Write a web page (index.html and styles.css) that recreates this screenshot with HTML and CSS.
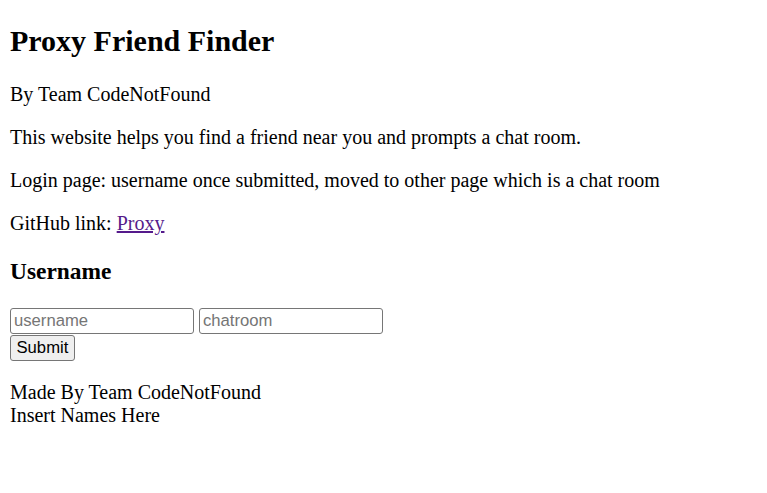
FILE: index.html
```html
<!DOCTYPE html>
<html>
<head>
<meta charset="utf-8">
<title>Proxy Friend Finder</title>
<link rel="stylesheet" href="styles.css">
</head>
<body class="page">
<h2 class="title">Proxy Friend Finder</h2>
<p class="text">By Team CodeNotFound</p>
<p class="text">This website helps you find a friend near you and prompts a chat room.</p>
<p class="text">Login page: username once submitted, moved to other page which is a chat room</p>
<p class="text">GitHub link: <a class="link" href="#">Proxy</a></p>
<h3 class="subtitle">Username</h3>
<form class="login">
<input class="field" type="text" placeholder="username"> <input class="field" type="text" placeholder="chatroom"><br>
<button class="submit" type="button">Submit</button>
</form>
<footer class="footer">Made By Team CodeNotFound<br>Insert Names Here</footer>
</body>
</html>
```
FILE: styles.css
```css
.page {
  margin: 0;
  padding: 10px;
  font-family: "Liberation Serif", "Times New Roman", serif;
  font-size: 20px;
  color: #000;
  background: #fff;
}
.title {
  font-size: 30px;
  font-weight: bold;
  margin: 14px 0 25px;
}
.text {
  margin: 20px 0;
}
.link {
  color: #551a8b;
  text-decoration: underline;
}
.subtitle {
  font-size: 23.4px;
  font-weight: bold;
  margin: 23.4px 0 22.4px;
}
.login {
  margin: 0 0 20px;
  line-height: 0;
}
.field {
  box-sizing: border-box;
  width: 184px;
  height: 26px;
  margin: 0;
  padding: 1px 3px;
  border: 1px solid #767676;
  border-radius: 3px;
  font-family: "Liberation Sans", Arial, sans-serif;
  font-size: 16.67px;
  color: #000;
  background: #fff;
  vertical-align: top;
}
.field::placeholder {
  color: #757575;
}
.login br {
  line-height: 26px;
}
.submit {
  box-sizing: border-box;
  height: 26px;
  margin: 1px 0 0;
  padding: 1px 5.5px;
  border: 1px solid #767676;
  border-radius: 3px;
  background: #efefef;
  font-family: "Liberation Sans", Arial, sans-serif;
  font-size: 16.67px;
  color: #000;
  vertical-align: top;
}
.footer {
  display: block;
  line-height: 23px;
}
```
